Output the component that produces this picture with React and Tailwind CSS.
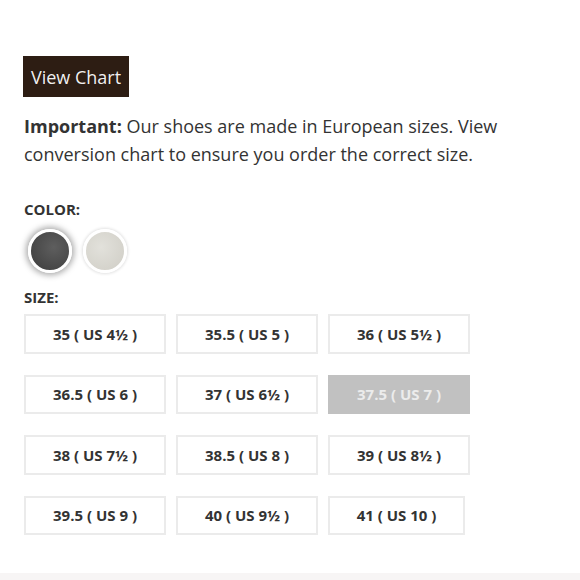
import React from "react";

const sizes = [
  ["35 ( US 4½ )", false],
  ["35.5 ( US 5 )", false],
  ["36 ( US 5½ )", false],
  ["36.5 ( US 6 )", false],
  ["37 ( US 6½ )", false],
  ["37.5 ( US 7 )", true],
  ["38 ( US 7½ )", false],
  ["38.5 ( US 8 )", false],
  ["39 ( US 8½ )", false],
  ["39.5 ( US 9 )", false],
  ["40 ( US 9½ )", false],
  ["41 ( US 10 )", false],
];

export default function App() {
  return (
    <div className="w-[580px] h-[580px] bg-white flex flex-col overflow-hidden font-['Open_Sans',sans-serif] text-[#333]">
      <div className="flex-1 pl-6 pt-[56px]">
        <button className="bg-[#2d1d13] text-white/95 text-[18px] leading-none h-[41px] w-[106px] -ml-px">
          View Chart
        </button>

        <p className="mt-[15px] text-[18px] leading-[28px] w-[520px]">
          <span className="font-bold">Important:</span> Our shoes are made in European sizes. View conversion chart to ensure you order the correct size.
        </p>

        <div className="mt-[32px] text-[15px] font-bold leading-[18px]">COLOR:</div>
        <div className="flex gap-[11px] mt-[11px] ml-[4px]">
          <div className="w-[44px] h-[44px] rounded-full border-[3px] border-white bg-[radial-gradient(circle_at_60%_40%,#5e5e5e,#3c3c3c)] shadow-[0_0_6px_2px_rgba(0,0,0,0.35)]" />
          <div className="w-[44px] h-[44px] rounded-full border-[3px] border-white bg-[radial-gradient(circle_at_40%_40%,#e2e1db,#cfcdc5)] shadow-[0_0_3px_1px_rgba(0,0,0,0.12)]" />
        </div>

        <div className="mt-[15px] text-[15px] font-bold leading-[18px]">SIZE:</div>
        <div className="grid grid-cols-[142px_142px_142px] gap-x-[10px] gap-y-[21px] mt-[8px]">
          {sizes.map(([label, active], i) => (
            <div
              key={i}
              className={
                active
                  ? "h-[39.5px] flex items-center justify-center bg-[#c1c1c1] text-[#ececec] text-[15px] font-bold border border-[#c1c1c1]"
                  : i === 11
                  ? "h-[39.5px] w-[137px] flex items-center justify-center border-2 border-[#ebebeb] text-[15px] font-bold"
                  : "h-[39.5px] flex items-center justify-center border-2 border-[#ebebeb] text-[15px] font-bold"
              }
            >
              {label}
            </div>
          ))}
        </div>
      </div>
      <div className="h-[7px] bg-[#f7f5f5]" />
    </div>
  );
}
